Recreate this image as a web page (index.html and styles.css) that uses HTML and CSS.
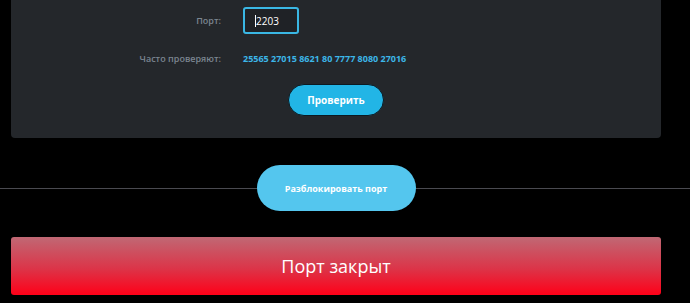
FILE: index.html
```html
<!DOCTYPE html>
<html lang="ru">
<head>
<meta charset="utf-8">
<link rel="stylesheet" href="styles.css">
</head>
<body>
<div class="wrap">
  <section class="panel">
    <div class="row">
      <span class="lbl">Порт:</span>
      <div class="input"><span class="caret"></span>2203</div>
    </div>
    <div class="row row-ports">
      <span class="lbl">Часто проверяют:</span>
      <span class="ports">25565 27015 8621 80 7777 8080 27016</span>
    </div>
    <div class="actions">
      <button class="btn-check">Проверить</button>
    </div>
  </section>
</div>
<div class="divider">
  <div class="wrap center">
    <button class="btn-unblock">Разблокировать порт</button>
  </div>
</div>
<div class="wrap">
  <div class="status">Порт закрыт</div>
</div>
</body>
</html>
```
FILE: styles.css
```css
html, body {
  margin: 0;
  padding: 0;
  background: #000;
}
body {
  font-family: "Open Sans", "Noto Sans", sans-serif;
  color: #fff;
}
.wrap {
  width: 650px;
  margin-left: 11px;
}
.center {
  display: flex;
  justify-content: center;
}
.panel {
  background: #24272b;
  border-radius: 0 0 4px 4px;
  padding: 7px 0 19px;
  height: 112px;
}
.row {
  display: grid;
  grid-template-columns: 210px auto;
  column-gap: 22px;
  align-items: center;
}
.lbl {
  text-align: right;
  color: #7b8590;
  font-size: 9px;
  font-weight: 600;
}
.input {
  box-sizing: border-box;
  width: 56px;
  height: 27px;
  border: 2px solid #3ab7e4;
  border-radius: 3px;
  background: #1f2226;
  color: #fff;
  font-size: 10px;
  font-weight: 500;
  display: flex;
  align-items: center;
  padding-left: 10px;
}
.caret {
  width: 1px;
  height: 12px;
  background: #fff;
  margin-right: 0;
}
.row-ports {
  margin-top: 18px;
}
.ports {
  color: #3cb6e8;
  font-size: 9px;
  font-weight: 700;
}
.actions {
  display: flex;
  justify-content: center;
  margin-top: 19px;
}
.btn-check {
  box-sizing: border-box;
  width: 96px;
  height: 32px;
  border-radius: 16px;
  border: 1px solid #0c1a22;
  background: #22b5e6;
  color: #fff;
  font-family: inherit;
  font-size: 10px;
  font-weight: 700;
  padding: 0;
}
.divider {
  margin-top: 27px;
  background: linear-gradient(#4a4a50, #4a4a50) 0 23px / 100% 1px no-repeat;
}
.btn-unblock {
  box-sizing: border-box;
  width: 159px;
  height: 46px;
  border-radius: 23px;
  border: none;
  background: #54c6ee;
  color: #fff;
  font-family: inherit;
  font-size: 9px;
  font-weight: 700;
  padding: 0;
}
.status {
  margin-top: 26px;
  height: 58px;
  border-radius: 3px;
  background: linear-gradient(to bottom, #c06874 0%, #dc3448 55%, #ff0018 100%);
  display: flex;
  align-items: center;
  justify-content: center;
  font-size: 18px;
  font-weight: 500;
  color: #fff;
}
```
